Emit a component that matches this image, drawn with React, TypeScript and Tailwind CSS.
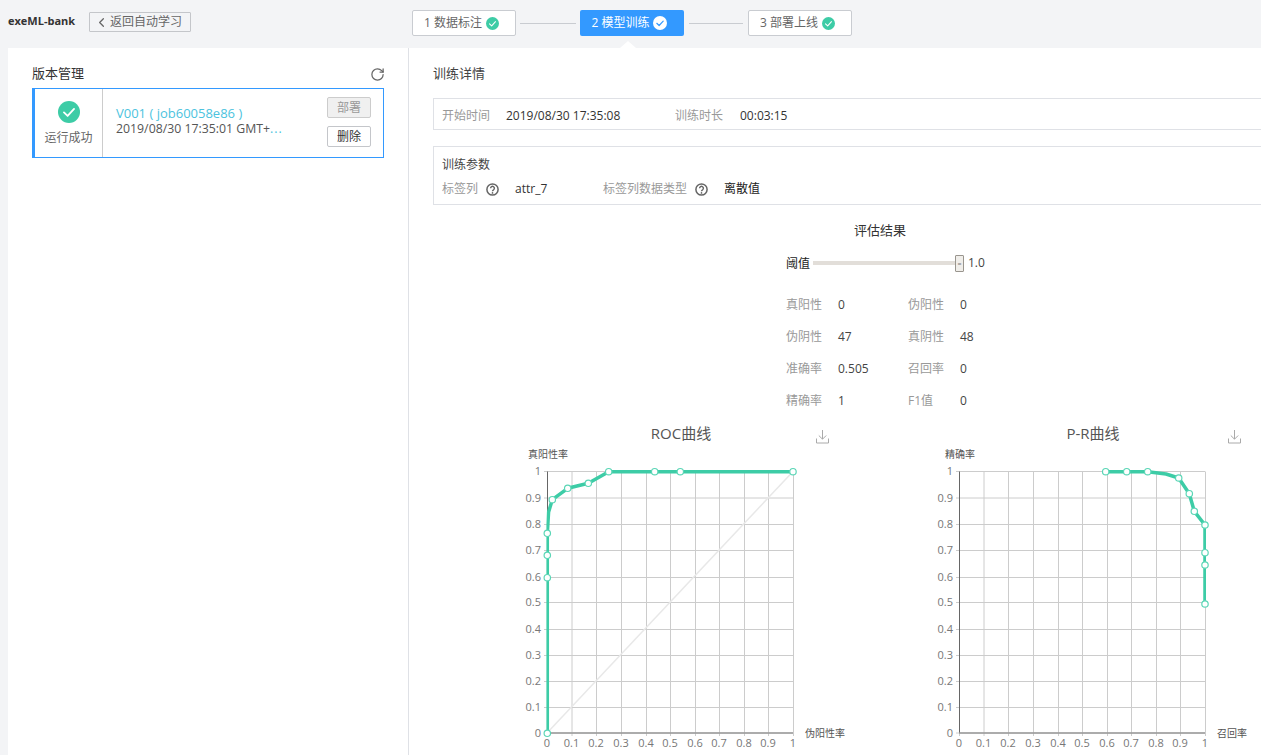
import { RotateCw, ChevronLeft } from "lucide-react";

const GREEN = "#3dcca6";

function Check({ size = 14, bg = GREEN, fg = "#fff" }: { size?: number; bg?: string; fg?: string }) {
  return (
    <svg width={size} height={size} viewBox="0 0 24 24" className="shrink-0">
      <circle cx="12" cy="12" r="12" fill={bg} />
      <path d="M6.5 12.5l4 3.8 7-7.6" fill="none" stroke={fg} strokeWidth="2" strokeLinecap="round" strokeLinejoin="round" />
    </svg>
  );
}

function Help() {
  return (
    <svg width="13" height="13" viewBox="0 0 13 13" className="shrink-0">
      <circle cx="6.5" cy="6.5" r="5.6" fill="none" stroke="#666" strokeWidth="1.5" />
      <path d="M4.6 5.2a1.9 1.9 0 1 1 2.9 1.6c-.7.4-1 .7-1 1.4" fill="none" stroke="#666" strokeWidth="1.4" />
      <circle cx="6.5" cy="9.9" r=".85" fill="#666" />
    </svg>
  );
}

function Step({ label, active }: { label: string; active?: boolean }) {
  return (
    <div
      className={
        active
          ? "relative flex h-[26px] w-[104px] items-center justify-center gap-1 rounded-[2px] bg-[#3399ff] pr-[5px] text-[12px] text-white"
          : "flex h-[26px] w-[104px] items-center justify-center gap-1 rounded-[2px] border border-[#c9ccd1] bg-white pr-[5px] text-[12px] text-[#666]"
      }
    >
      <span>{label}</span>
      {active ? <Check size={14} bg="#fff" fg="#3399ff" /> : <Check size={13} />}
      {active && (
        <span className="absolute left-[40px] top-[31px] h-0 w-0 border-x-[8px] border-b-[7px] border-x-transparent border-b-white" />
      )}
    </div>
  );
}

function Metric({ label, value }: { label: string; value: string }) {
  return (
    <div className="flex h-8 items-center">
      <span className="w-[52px] text-[#999]">{label}</span>
      <span className="text-[#444]">{value}</span>
    </div>
  );
}

const TICKS = ["0", "0.1", "0.2", "0.3", "0.4", "0.5", "0.6", "0.7", "0.8", "0.9", "1"];
const YS = [733, 707.5, 681.5, 655.5, 629.5, 602.5, 577.5, 550.5, 524.5, 498, 471.5];
const XS = [0, 24.5, 49, 74, 99, 123, 148, 172, 197, 221, 246];

type ChartProps = {
  title: string;
  titleX: number;
  originX: number;
  yName: string;
  yNameX: number;
  xName: string;
  xNameX: number;
  dlX: number;
  points: [number, number][];
  marks: [number, number][];
  diagonal?: boolean;
  clipX: number;
  clipW: number;
  width: number;
};

function Chart({ title, titleX, originX, yName, yNameX, xName, xNameX, dlX, points, marks, diagonal, clipX, clipW, width }: ChartProps) {
  const oy = 420;
  const id = `clip${originX}`;
  const y0 = YS[0] - oy;
  const y1 = YS[10] - oy;
  return (
    <svg width={width} height={335} className="block shrink-0" style={{ fontFamily: "'Open Sans','Noto Sans CJK SC',sans-serif" }}>
      <defs>
        <clipPath id={id}>
          <rect x={clipX} y={0} width={clipW} height={335} />
        </clipPath>
      </defs>
      <text x={titleX} y={19} textAnchor="middle" fontSize="15" fill="#555">{title}</text>
      <g transform={`translate(${dlX} 10)`} fill="none" stroke="#aaa" strokeWidth="1">
        <path d="M6.5 0v9M2.8 5.5L6.5 9.2l3.7-3.7M0.5 8.5v4.5h12V8.5" />
      </g>
      <text x={yNameX} y={38} fontSize="10" fill="#555">{yName}</text>
      <text x={xNameX} y={317} fontSize="10" fill="#555">{xName}</text>
      {XS.map((x, i) => (
        <line key={i} x1={originX + x + 0.5} x2={originX + x + 0.5} y1={y1} y2={y0 + 3} stroke="#ccc" />
      ))}
      {YS.map((y, i) => (
        <line key={i} x1={originX - 3} x2={originX + 246} y1={y - oy} y2={y - oy} stroke="#ccc" />
      ))}
      {diagonal && <line x1={originX} y1={y0} x2={originX + 246} y2={y1} stroke="#e8e8e8" strokeWidth="1.5" />}
      <line x1={originX + 0.5} x2={originX + 0.5} y1={y1} y2={y0} stroke="#666" />
      <line x1={originX} x2={originX + 246} y1={y0} y2={y0} stroke="#999" strokeWidth="1.5" />
      {TICKS.map((t, i) => (
        <text key={`y${i}`} x={originX - 6} y={YS[i] - oy + 3.5} textAnchor="end" fontSize="11" fill="#777">{t}</text>
      ))}
      {TICKS.map((t, i) => (
        <text key={`x${i}`} x={originX + XS[i]} y={y0 + 14} textAnchor="middle" fontSize="11" fill="#777">{t}</text>
      ))}
      <polyline
        clipPath={`url(#${id})`}
        points={points.map(([x, y]) => `${x},${y}`).join(" ")}
        fill="none"
        stroke={GREEN}
        strokeWidth="3.5"
        strokeLinejoin="round"
      />
      {marks.map(([x, y], i) => (
        <circle key={i} cx={x} cy={y} r="3.2" fill="#fff" stroke="#5bd6b6" strokeWidth="1.2" />
      ))}
    </svg>
  );
}

const rocMarks: [number, number][] = [
  [37.3, 313.3], [37.3, 157.7], [37.3, 135.3], [37.3, 113.3], [42.3, 79.7], [57.7, 68.3], [78.3, 63.3], [98.7, 51.7], [144.7, 51.7], [170.3, 51.7], [283, 51.7],
];
const rocLine: [number, number][] = [
  [37.3, 313.3], [37.3, 113.3], [38.6, 92], [42.3, 79.7], [57.7, 68.3], [78.3, 63.3], [98.7, 51.7], [283, 51.7],
];
const prMarks: [number, number][] = [
  [175.7, 51.7], [196.7, 51.7], [217.7, 51.7], [248.7, 58], [259.3, 73.7], [264.3, 91.3], [275, 105], [275, 132.7], [275, 145], [275, 184],
];
const prLine: [number, number][] = [
  [175.7, 51.7], [217.7, 51.7], [236, 54], [248.7, 58], [259.3, 73.7], [264.3, 91.3], [275, 105], [275, 184],
];

export default function App() {
  return (
    <div className="flex h-[755px] w-[1261px] flex-col overflow-hidden bg-[#f3f4f6] font-['Open_Sans','Noto_Sans_CJK_SC',sans-serif] text-[12px] text-[#333]">
      <header className="flex h-12 shrink-0 items-start">
        <span className="ml-2 mt-[13px] w-[66px] whitespace-nowrap text-[11px] font-bold leading-4 text-[#333]">exeML-bank</span>
        <button className="ml-[15px] mt-3 flex h-5 w-[102px] items-center justify-center rounded-[1px] border border-[#c4c6ca] text-[#666]">
          <ChevronLeft size={15} strokeWidth={2} className="-ml-1 mr-px" />
          返回自动学习
        </button>
        <div className="ml-[221px] mt-[10px] flex items-center">
          <Step label="1 数据标注" />
          <span className="mx-1 h-px w-14 bg-[#c9ccd1]" />
          <Step label="2 模型训练" active />
          <span className="mx-[5px] h-px w-[54px] bg-[#c9ccd1]" />
          <Step label="3 部署上线" />
        </div>
      </header>

      <main className="ml-2 flex min-h-0 flex-1 bg-white">
        <section className="w-[401px] shrink-0 border-r border-[#dfe1e6] pl-6 pr-6">
          <div className="flex h-10 items-end justify-between pb-[5px]">
            <span className="text-[13px] leading-5 text-[#333]">版本管理</span>
            <RotateCw size={15} strokeWidth={2} className="-mr-px mb-[1px] text-[#666]" />
          </div>
          <div className="flex h-[70px] w-[352px] border border-[#3399ff] border-l-[3px] bg-white">
            <div className="flex w-[68px] shrink-0 flex-col items-center border-r border-[#ccc] pt-[12px] text-[#666]">
              <Check size={22} />
              <span className="mt-[7px] leading-4">运行成功</span>
            </div>
            <div className="min-w-0 flex-1 pl-[13px] pt-[16px]">
              <div className="text-[13px] leading-4 text-[#4cc3de]">V001 ( job60058e86 )</div>
              <div className="text-[12.3px] leading-4 text-[#555]">
                2019/08/30 17:35:01 GMT+<span className="tracking-[1px] text-[#4cc3de]">...</span>
              </div>
            </div>
            <div className="flex w-[56px] shrink-0 flex-col pt-2">
              <button className="h-[21px] w-11 rounded-[2px] border border-[#ccc] bg-[#f0f0f0] text-[#999]">部署</button>
              <button className="mt-2 h-[21px] w-11 rounded-[2px] border border-[#c4c6ca] bg-white text-[#333]">删除</button>
            </div>
          </div>
        </section>

        <section className="min-w-0 flex-1 overflow-hidden">
          <div className="pl-6">
            <div className="mt-[15px] text-[13px] leading-5 text-[#444]">训练详情</div>
            <div className="mt-[15px] flex h-8 w-[900px] items-center border border-[#dfe1e6] pl-2 pt-[3px]">
              <span className="w-16 text-[#999]">开始时间</span>
              <span className="w-[169px] text-[#333]">2019/08/30 17:35:08</span>
              <span className="w-[65px] text-[#999]">训练时长</span>
              <span className="text-[#333]">00:03:15</span>
            </div>
            <div className="mt-4 h-[59px] w-[900px] border border-[#dfe1e6] pl-2 pt-[10px]">
              <div className="leading-4 text-[#444]">训练参数</div>
              <div className="mt-[8px] flex items-center leading-4">
                <span className="w-11 text-[#999]">标签列</span>
                <Help />
                <span className="ml-4 w-[88px] text-[#333]">attr_7</span>
                <span className="w-[92px] text-[#999]">标签列数据类型</span>
                <Help />
                <span className="ml-4 text-[#222]">离散值</span>
              </div>
            </div>
          </div>

          <div className="ml-[445px] mt-[15px] text-[13px] leading-5 text-[#333]">评估结果</div>

          <div className="ml-[377px] w-[260px]">
            <div className="mt-[14px] flex h-[18px] items-center">
              <span className="w-[27px] pt-px text-[#222]">阈值</span>
              <div className="h-1 w-[142px] bg-[#e2ded9]" />
              <div className="flex h-[17px] w-[9px] items-center justify-center rounded-[1px] border border-[#99958e] bg-[#f0eeea] text-[7px] leading-none text-[#777]">=</div>
              <span className="ml-[4px] text-[#444]">1.0</span>
            </div>
            <div className="mt-[17px] grid grid-cols-[122px_1fr]">
              <Metric label="真阳性" value="0" />
              <Metric label="伪阳性" value="0" />
              <Metric label="伪阴性" value="47" />
              <Metric label="真阴性" value="48" />
              <Metric label="准确率" value="0.505" />
              <Metric label="召回率" value="0" />
              <Metric label="精确率" value="1" />
              <Metric label="F1值" value="0" />
            </div>
          </div>

          <div className="ml-[101px] mt-[3px] flex">
            <Chart
              title="ROC曲线"
              titleX={171}
              originX={37}
              yName="真阳性率"
              yNameX={18}
              xName="伪阳性率"
              xNameX={295}
              dlX={306}
              points={rocLine}
              marks={rocMarks}
              diagonal
              clipX={36.4}
              clipW={300}
              width={340}
            />
            <div className="w-20 shrink-0" />
            <Chart
              title="P-R曲线"
              titleX={163}
              originX={29}
              yName="精确率"
              yNameX={15}
              xName="召回率"
              xNameX={287}
              dlX={298}
              points={prLine}
              marks={prMarks}
              clipX={0}
              clipW={276}
              width={331}
            />
          </div>
        </section>
      </main>
    </div>
  );
}
